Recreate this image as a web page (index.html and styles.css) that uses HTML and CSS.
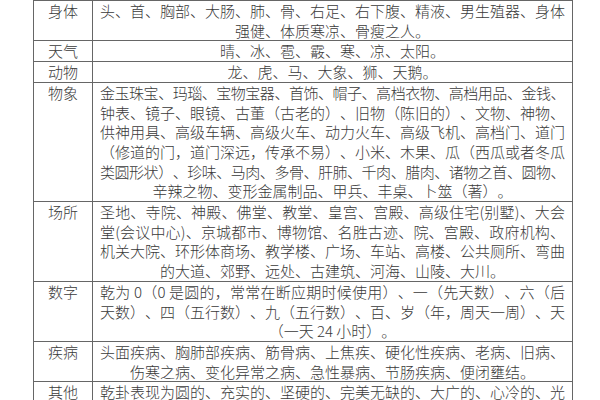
FILE: index.html
```html
<!DOCTYPE html>
<html lang="zh-CN">
<head>
<meta charset="utf-8">
<title>乾卦类象</title>
<link rel="stylesheet" href="styles.css">
</head>
<body>
<div class="table">
  <div class="label">身体</div>
  <div class="content">
    <span class="ln">头、首、胸部、大肠、肺、骨、右足、右下腹、精液、男生殖器、身体</span>
    <span class="ln last">强健、体质寒凉、骨瘦之人。</span>
  </div>

  <div class="label">天气</div>
  <div class="content">
    <span class="ln last">晴、冰、雹、霰、寒、凉、太阳。</span>
  </div>

  <div class="label">动物</div>
  <div class="content">
    <span class="ln last">龙、虎、马、大象、狮、天鹅。</span>
  </div>

  <div class="label">物象</div>
  <div class="content">
    <span class="ln tight">金玉珠宝、玛瑙、宝物宝器、首饰、帽子、高档衣物、高档用品、金钱、</span>
    <span class="ln">钟表、镜子、眼镜、古董（古老的）、旧物（陈旧的）、文物、神物、</span>
    <span class="ln">供神用具、高级车辆、高级火车、动力火车、高级飞机、高档门、道门</span>
    <span class="ln">（修道的门，道门深远，传承不易）、小米、木果、瓜（西瓜或者冬瓜</span>
    <span class="ln tight">类圆形状）、珍味、马肉、多骨、肝肺、千肉、腊肉、诸物之首、圆物、</span>
    <span class="ln last">辛辣之物、变形金属制品、甲兵、丰桌、卜筮（著）。</span>
  </div>

  <div class="label">场所</div>
  <div class="content">
    <span class="ln">圣地、寺院、神殿、佛堂、教堂、皇宫、宫殿、高级住宅(别墅)、大会</span>
    <span class="ln">堂(会议中心)、京城都市、博物馆、名胜古迹、院、宫殿、政府机构、</span>
    <span class="ln">机关大院、环形体商场、教学楼、广场、车站、高楼、公共厕所、弯曲</span>
    <span class="ln last">的大道、郊野、远处、古建筑、河海、山陵、大川。</span>
  </div>

  <div class="label">数字</div>
  <div class="content">
    <span class="ln">乾为 0（0 是圆的，常常在断应期时候使用）、一（先天数）、六（后</span>
    <span class="ln">天数）、四（五行数）、九（五行数）、百、岁（年，周天一周）、天</span>
    <span class="ln last">（一天 24 小时）。</span>
  </div>

  <div class="label">疾病</div>
  <div class="content">
    <span class="ln">头面疾病、胸肺部疾病、筋骨病、上焦疾、硬化性疾病、老病、旧病、</span>
    <span class="ln last">伤寒之病、变化异常之病、急性暴病、节肠疾病、便闭壅结。</span>
  </div>

  <div class="label">其他</div>
  <div class="content">
    <span class="ln">乾卦表现为圆的、充实的、坚硬的、完美无缺的、大广的、心冷的、光</span>
  </div>
</div>
</body>
</html>
```

FILE: styles.css
```css
html {
  overflow: hidden;
  background: #ffffff;
}

body {
  margin: 0;
  font-family: "Noto Sans CJK SC", "Noto Sans", sans-serif;
  font-size: 15px;
  line-height: 19.7px;
  color: #3a3a3a;
}

.table {
  margin-left: 33px;
  width: 540px;
  box-sizing: border-box;
  border-left: 1px solid #666666;
  border-top: 1px solid #666666;
  display: grid;
  grid-template-columns: 59px 480px;
}

.label,
.content {
  box-sizing: border-box;
  border-right: 1px solid #666666;
  border-bottom: 1px solid #666666;
}

.label {
  text-align: center;
  font-weight: 300;
}

.content {
  padding: 0 7px;
  font-weight: 300;
  text-spacing-trim: space-all;
}

.ln {
  display: block;
  white-space: nowrap;
  text-align: justify;
  text-align-last: justify;
}

.ln.tight {
  letter-spacing: -0.5px;
}

.ln.last {
  text-align: center;
  text-align-last: center;
}
```
